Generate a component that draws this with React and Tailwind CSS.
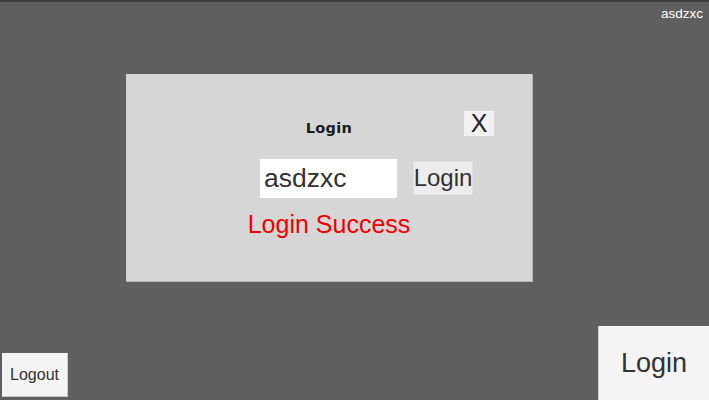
export default function App() {
  return (
    <div
      className="relative w-[709px] h-[400px] bg-[#5f5f5f] border-t-2 border-[#3c3c3c] flex flex-col overflow-hidden"
      style={{ fontFamily: '"Liberation Sans", Arial, sans-serif' }}
    >
      <div className="flex justify-end pr-[6px] pt-[3px] text-[13.5px] leading-[18px] text-white">
        asdzxc
      </div>

      <div className="absolute left-[126px] top-[72px] w-[407px] h-[208px] bg-[#d6d6d6] border-r border-b border-[#b4b4b4] flex flex-col">
        <div
          className="mt-[46px] text-center text-[14.5px] leading-[16px] font-bold tracking-[0.3px] text-[#1a1a1a]"
          style={{ fontFamily: '"DejaVu Sans", sans-serif' }}
        >
          Login
        </div>
        <button className="absolute top-[37px] right-[38px] w-[30px] h-[25px] bg-[#f2f2f2] text-[25px] leading-[25px] text-[#222] flex items-center justify-center">
          X
        </button>
        <div className="mt-[23px] ml-[134px] flex items-start gap-[16px]">
          <div className="w-[137px] h-[39px] bg-white flex items-center pl-[4px] text-[26.5px] text-[#323232]">
            asdzxc
          </div>
          <button className="mt-[2px] w-[60px] h-[34px] bg-[#ececec] border border-[#dedede] flex items-center justify-center text-[24px] text-[#323232] overflow-hidden whitespace-nowrap">
            Login
          </button>
        </div>
        <div className="mt-[12px] text-center text-[25px] leading-[29px] text-[#f20000]">
          Login Success
        </div>
      </div>

      <div className="mt-auto flex justify-between items-end">
        <button className="ml-[2px] mb-[3px] w-[66px] h-[44px] bg-[#f4f4f4] border-r border-b border-[#c8c8c8] text-[16px] text-[#323232] flex items-center justify-center">
          Logout
        </button>
        <button className="w-[111px] h-[74px] bg-[#f4f4f4] border-l border-[#d0d0d0] text-[27px] text-[#323232] flex items-center justify-center">
          Login
        </button>
      </div>
    </div>
  );
}
